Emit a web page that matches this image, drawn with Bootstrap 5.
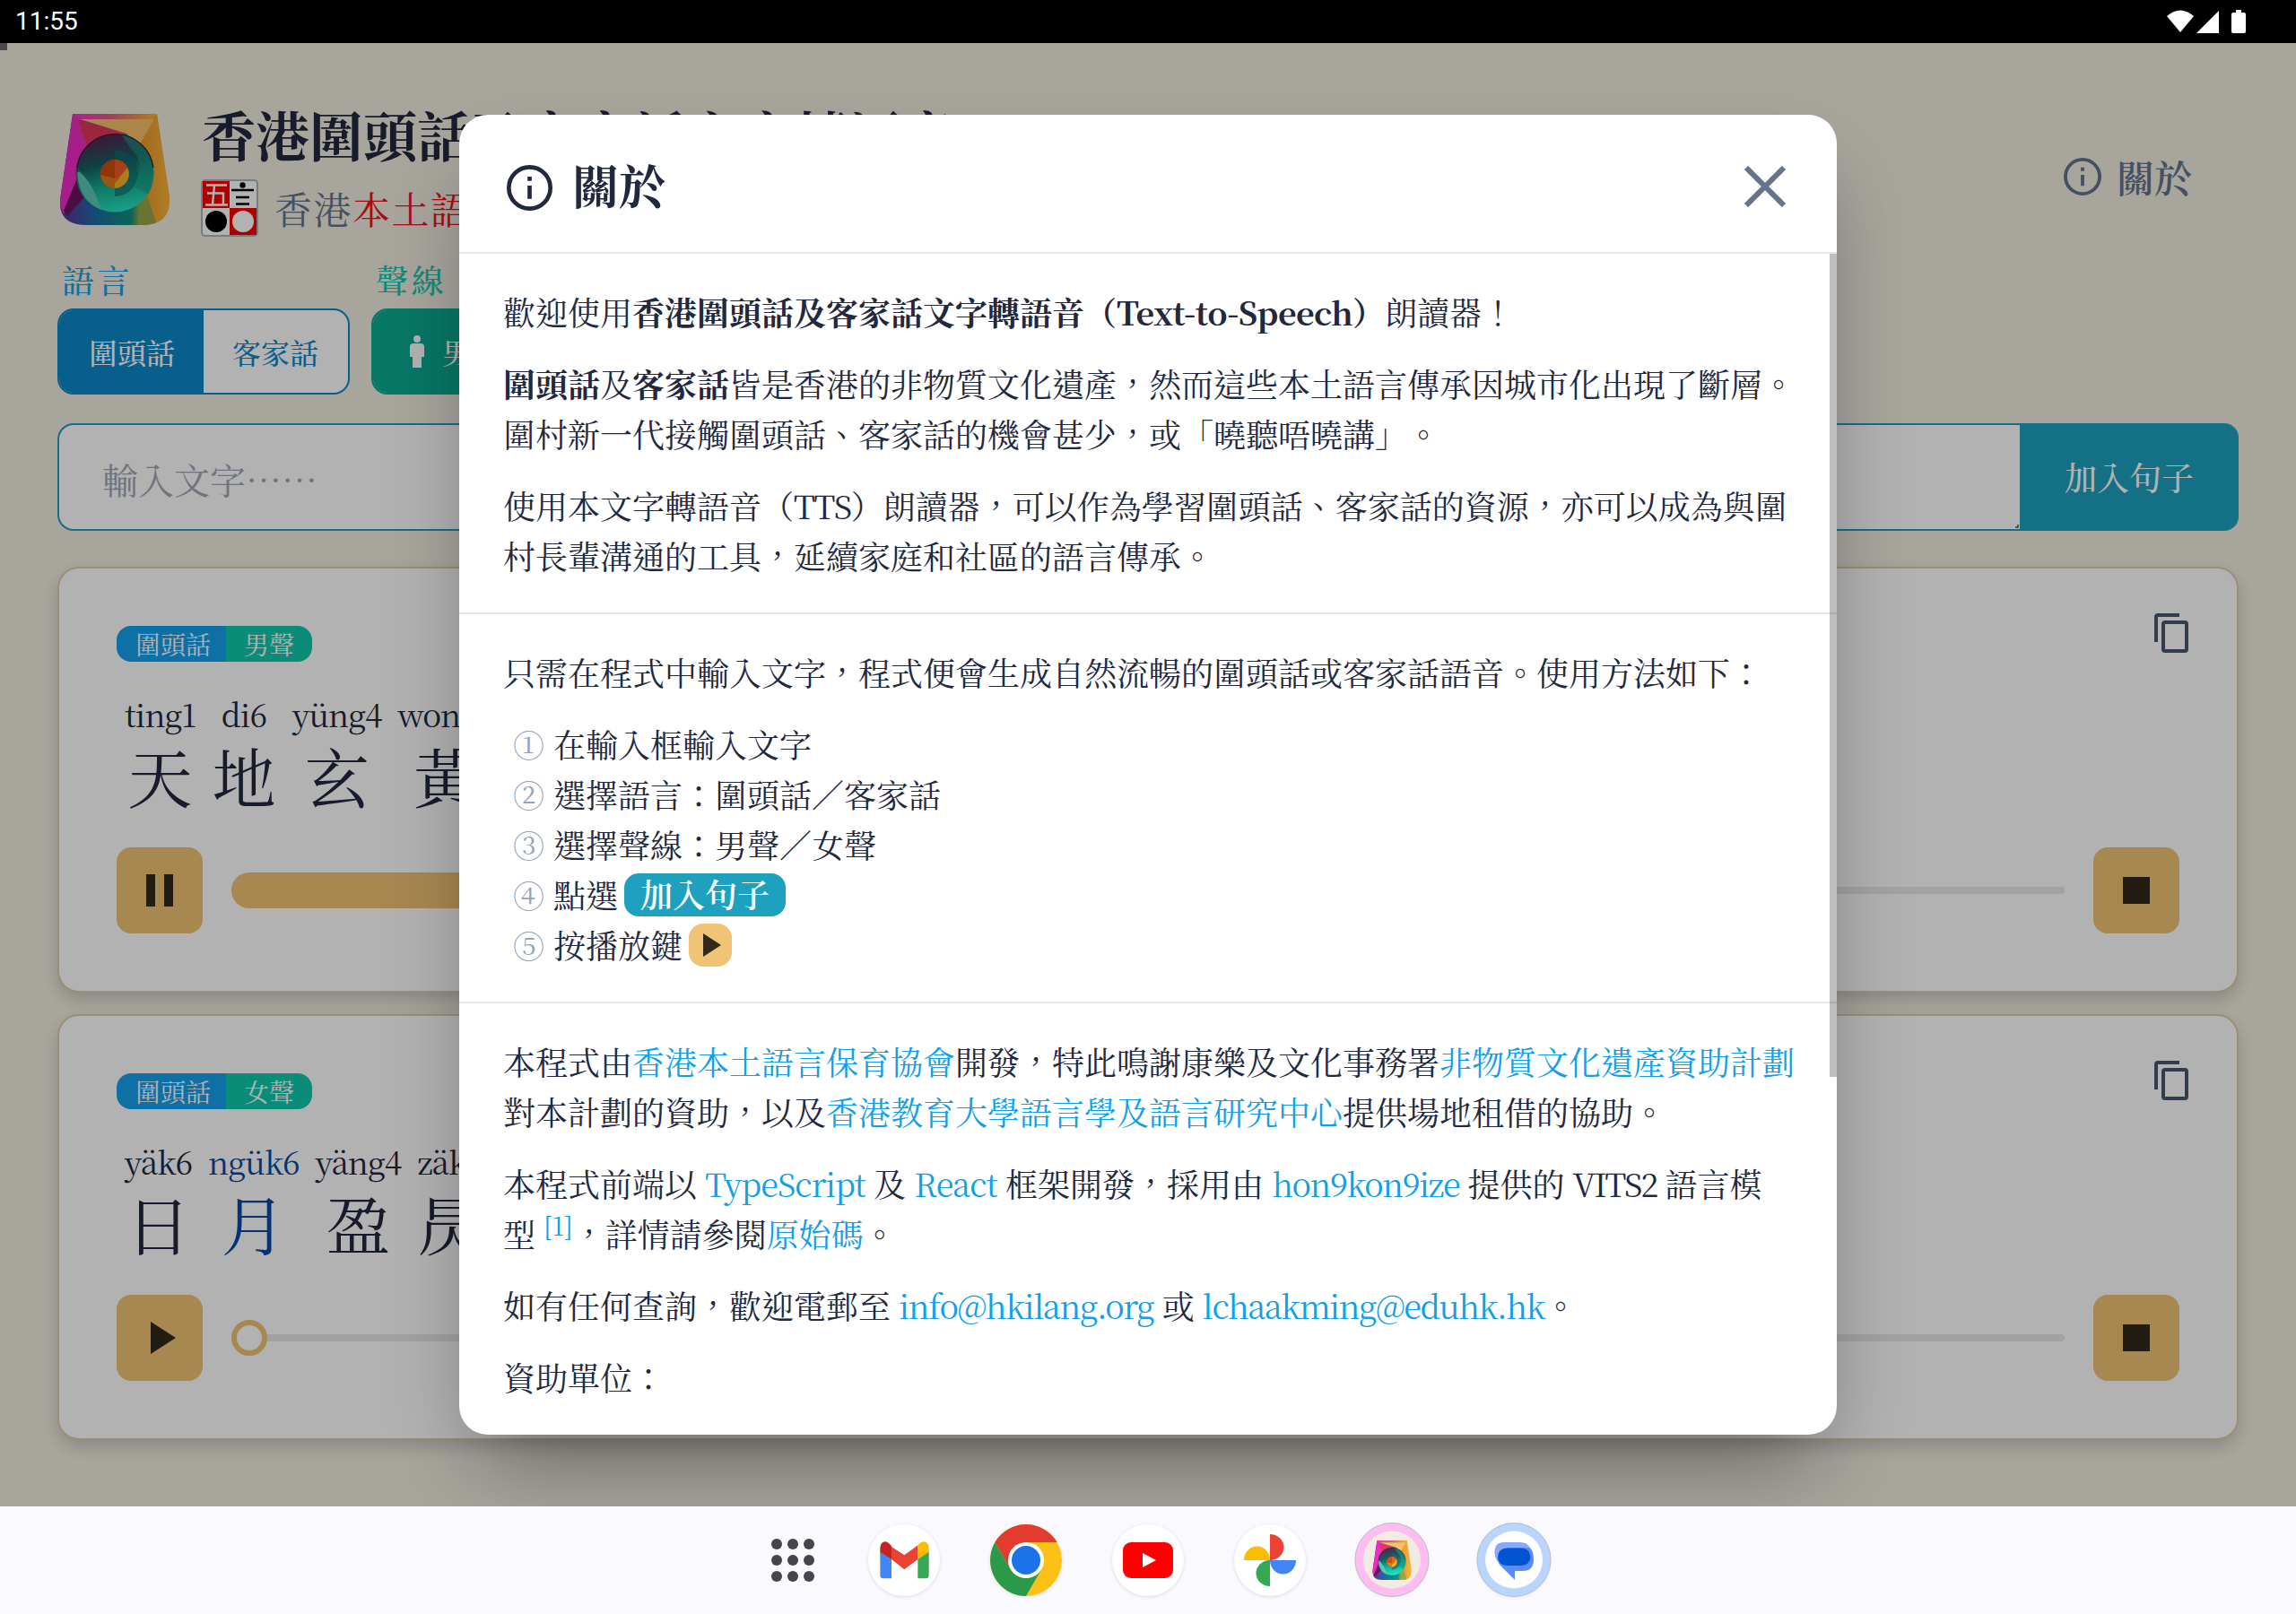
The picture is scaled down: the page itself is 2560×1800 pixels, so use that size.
<!DOCTYPE html>
<html lang="zh-Hant-HK">
<head>
<meta charset="utf-8">
<title>香港圍頭話及客家話文字轉語音</title>
<link href="https://cdn.jsdelivr.net/npm/bootstrap@5.3.0/dist/css/bootstrap.min.css" rel="stylesheet">
<style>
  :root { --ink:#22283d; --sky:#15a1ec; --mint:#10c9ae; --teal:#1da1bf; --gold:#f0c375; }
  body { font-family:"Noto Serif CJK TC","Noto Serif TC","Source Han Serif TC","Noto Serif","Liberation Serif","Noto Sans CJK TC",serif; color:var(--ink); width:2560px; height:1800px; overflow:hidden; background:#faf9ff; font-size:36px; line-height:56px; text-spacing-trim:space-all; font-feature-settings:"chws" 0; }
  svg { display:block; flex:none; }
  .statusbar { height:48px; padding:0 56px 0 17px; font:28px/48px Roboto,sans-serif; background:#000; color:#fff; }
  .stage { height:1632px; background:#f1ede1; }
  .nub { left:0; top:0; width:8px; height:8px; background:#6a6a6a; z-index:5; }
  .page { padding:68px 64px 0; }
  .topbar { height:148px; }
  .applogo { margin:11px 36px 0 3px; }
  .apptitle { font-size:60px; line-height:66px; font-weight:700; margin:0 0 18px; }
  .subtitle { font-size:42px; line-height:64px; letter-spacing:1.5px; color:#64748b; gap:18px; margin-left:-1px; }
  .subtitle em { font-style:normal; color:#f01020; }
  .aboutbtn { font-size:42px; line-height:60px; color:#64748b; font-weight:600; padding-right:52px; gap:17px; margin-top:14px; }
  .fields { gap:24px; margin-top:20px; }
  .fieldlabel { letter-spacing:3.6px; font-weight:500; padding-left:5px; margin-bottom:4px; }
  .seg { height:96px; font-size:32px; font-weight:500; border:2px solid; border-radius:18px; overflow:hidden; background:#fff; width:max-content; }
  .seg > div { padding:0 32px; } .seg > .on { padding:0 32px 0 33px; } .seg > div:last-child { padding-right:33px; }
  .seg-sky { border-color:#0e89c9; color:#0e89c9; } .seg-sky .on { background:#0e89c9; color:#fff; }
  .seg-mint { border-color:#0bab92; color:#0bab92; } .seg-mint .on { background:#0bab92; color:#fff; }
  .composer { height:120px; margin-top:32px; }
  .entry { border:2px solid var(--teal); border-right:0; border-radius:18px 0 0 18px; background:#fff; font-size:40px; color:#a0a6b4; padding:4px 0 0 48px; }
  .addbtn { width:244px; background:var(--teal); color:#fff; border-radius:0 16px 16px 0; font-weight:500; }
  .clips { gap:24px; margin-top:40px; }
  .clip { height:475px; border:2px solid #dcccab; border-radius:24px; background:#fff; padding:64px 64px 0; box-shadow:0 8px 20px -2px rgba(0,0,0,.2); }
  .tags { height:40px; font-size:28px; line-height:40px; color:#fff; border-radius:16px; overflow:hidden; width:max-content; }
  .tags span:first-child { background:var(--sky); padding:0 17px 0 21px; } .tags span:last-child { background:var(--mint); padding:0 20px; }
  .copyicon { top:50px; right:54px; }
  .syls { height:207px; padding:32px 0 0 9px; gap:18px; }
  .syls > div { min-width:72px; text-align:center; }
  .syls small { display:block; font-size:35px; line-height:52px; letter-spacing:-1px; } .syls b { display:block; font-weight:400; font-size:72px; line-height:80px; margin-top:2px; }
  .sq { width:96px; height:96px; border-radius:16px; background:var(--gold); color:#33291a; }
  .track { height:8px; border-radius:4px; background:#e8e8e8; margin:0 32px; }
  .fillbar { left:0; top:-16px; height:40px; border-radius:20px; background:var(--gold); }
  .knob { left:0; top:-16px; width:40px; height:40px; border-radius:50%; border:6px solid var(--gold); background:#fff; }
  .shade { inset:0; background:rgba(0,0,0,.3); padding-top:80px; z-index:10; }
  .dialogbox { width:1536px; height:1472px; background:#fff; border-radius:32px; overflow:hidden; box-shadow:0 50px 100px -24px rgba(0,0,0,.4); }
  .dlghead { height:155px; border-bottom:2px solid #e5e7eb; padding:6px 48px 0; }
  .dlghead h2 { font-size:52px; line-height:72px; font-weight:700; margin:-3px 0 0; }
  .sect { padding:37px 48px 35px 49px; }
  .sect + .sect { border-top:2px solid #e5e7eb; }
  .sect p { margin:0 0 24px; white-space:nowrap; } .sect p:last-child { margin:0; }
  .sect a { color:#139fe8; text-decoration:none; }
  .sect sup { font-size:28px; line-height:0; top:-.46em; }
  .t06 { letter-spacing:-.6px; } .t10 { letter-spacing:-1px; } .t13 { letter-spacing:-1.3px; } .t15 { letter-spacing:-1.5px; } .t22 { letter-spacing:-2.2px; }
  .steps { list-style:none; margin:0; padding:0 0 0 11px; }
  .steps li { height:56px; } .steps li > i { font-style:normal; font-size:35px; color:#94a3b8; width:45px; }
  .chip { height:48px; line-height:46px; border-radius:16px; background:var(--teal); color:#fff; padding:0 18px; font-weight:600; margin-left:7px; }
  .chipplay { width:48px; height:48px; border-radius:16px; background:var(--gold); margin-left:7px; }
  .thumb { right:0; top:155px; width:8px; height:918px; background:rgba(0,0,0,.25); }
  .dock { height:120px; }
  .dockrow { padding-left:860px; }
  .dockapps { gap:56px; margin-left:60px; }
  .disc { width:80px; height:80px; border-radius:50%; background:#fff; box-shadow:0 1px 4px rgba(0,0,0,.12); }
</style>
<script src="https://cdn.jsdelivr.net/npm/bootstrap@5.3.0/dist/js/bootstrap.bundle.min.js"></script>
</head>
<body>
<svg width="0" height="0" class="position-absolute">
  <defs>
    <linearGradient id="lgTop" x1="0" x2="1"><stop offset="0" stop-color="#ff2fd0"/><stop offset=".45" stop-color="#e0607c"/><stop offset="1" stop-color="#ffb52e"/></linearGradient>
    <linearGradient id="lgRight" x1="0" x2="1"><stop offset="0" stop-color="#e8962c"/><stop offset="1" stop-color="#fbb437"/></linearGradient>
    <linearGradient id="lgBase" x1="0" x2="1"><stop offset="0" stop-color="#6a2a90"/><stop offset=".3" stop-color="#1c6aa8"/><stop offset=".65" stop-color="#139080"/><stop offset=".72" stop-color="#8aa64a"/><stop offset="1" stop-color="#f4a93a"/></linearGradient>
    <linearGradient id="lgDisc" x1=".3" y1="0" x2=".5" y2="1"><stop offset="0" stop-color="#5e1c50"/><stop offset=".38" stop-color="#175c62"/><stop offset=".65" stop-color="#14a890"/><stop offset="1" stop-color="#26e6c0"/></linearGradient>
    <clipPath id="lgClip"><path d="M14 0H108L122 92Q124 124 92 124H30Q-2 124 0 96Z"/></clipPath>
    <symbol id="logo" viewBox="0 0 122 124">
      <g clip-path="url(#lgClip)">
        <rect width="122" height="124" fill="url(#lgBase)"/>
        <path d="M14 0H108L104 6H20Z" fill="url(#lgTop)"/>
        <path d="M14 0L24 6 30 40 16 80 4 112-2 96Z" fill="#ee2bc4"/>
        <path d="M14 0L40 28 30 45Z" fill="#e23aa8"/>
        <path d="M20 6L74 22 40 30 30 36Z" fill="#e0355e"/>
        <path d="M22 6H108L92 40 74 22Z" fill="#f7c069"/>
        <path d="M108 0L122 92 122 124H108L92 76 88 36Z" fill="url(#lgRight)"/>
        <path d="M92 76L108 124H86Z" fill="#9aa548"/>
        <path d="M19 72L4 108 8 114 28 92Z" fill="#6a1560"/>
      </g>
      <circle cx="61" cy="66" r="43.500" fill="url(#lgDisc)"/>
      <path d="M68 23A43.500 43.500 0 0 1 104.500 66 43.500 43.500 0 0 1 98 90L84 82Q96 56 80 40Z" fill="#1a9a80" opacity=".6"/>
      <path d="M61 40A26 26 0 0 1 61 92Z" fill="#0c6d6c" opacity=".65"/>
      <path d="M21 64Q36 76 46 107Q22 98 19 66Z" fill="#5cc8b6"/>
      <path d="M19 60A43 43 0 0 1 61 22.500 43 43 0 0 1 104 60" fill="none" stroke="#301828" stroke-width="1.200"/>
      <circle cx="61" cy="67" r="16" fill="#e07a1c"/>
      <path d="M45 68A16 16 0 0 1 61 51V72Z" fill="#cf4c0e"/><path d="M61 51A16 16 0 0 1 75 60L63 72H61Z" fill="#ee5a24"/><path d="M75 60A16 16 0 0 1 61 83V78Z" fill="#f5b429"/>
    </symbol>
    <symbol id="info" viewBox="0 0 24 24"><circle cx="12" cy="12" r="10.900" fill="none" stroke="currentColor" stroke-width="2.200"/><path d="M10.900 6.100h2.200v2.300h-2.200zM10.900 10.800h2.200v7h-2.200z" fill="currentColor"/></symbol>
    <symbol id="copy" viewBox="0 0 38 44"><path d="M28 2H4Q2 2 2 4V32M12 10H34Q36 10 36 12V40Q36 42 34 42H12Q10 42 10 40V12Q10 10 12 10Z" fill="none" stroke="currentColor" stroke-width="4"/></symbol>
  </defs>
</svg>

<div class="statusbar d-flex align-items-center justify-content-between">
  <span>11:55</span>
  <svg width="88" height="26" viewBox="0 0 88 26" fill="#fff"><path d="M0 7Q15-6 30 7L15 25Z"/><path d="M33 26L58 1V26Z"/><path d="M77 0h6v3h3q2 0 2 2v19q0 2-2 2H74q-2 0-2-2V5q0-2 2-2h3z"/></svg>
</div>

<main class="stage position-relative overflow-hidden">
  <div class="page">
    <header class="topbar d-flex justify-content-between">
      <div class="d-flex">
        <svg class="applogo" width="122" height="124"><use href="#logo"/></svg>
        <div>
          <h1 class="apptitle">香港圍頭話及客家話文字轉語音</h1>
          <div class="subtitle d-flex align-items-center">
            <svg width="64" height="64" viewBox="0 0 64 64"><rect x="1" y="1" width="62" height="62" rx="4" fill="#fff" stroke="#a9b3be" stroke-width="2"/><path d="M2 2H32V32H2zM32 32H62V62H32z" fill="#fb0000"/><circle cx="17" cy="47" r="12"/><circle cx="47" cy="47" r="12" fill="#fff"/><circle cx="46.500" cy="6.500" r="3.200"/><path d="M34 12H59M39 20H54M39 27.500H54" stroke="#000" stroke-width="2.400"/><path d="M6 6.500H29M7 15.500H25V28M15 7L13 28M5 28.500H30" fill="none" stroke="#fff" stroke-width="2.400"/></svg>
            <span>香港<em>本土語言</em>保育協會</span>
          </div>
        </div>
      </div>
      <div class="aboutbtn d-flex align-items-center align-self-center"><svg width="42" height="42"><use href="#info"/></svg><span>關於</span></div>
    </header>

    <div class="fields d-flex">
      <div>
        <div class="fieldlabel" style="color:var(--sky)">語言</div>
        <div class="seg seg-sky d-flex align-items-stretch"><div class="on d-flex align-items-center">圍頭話</div><div class="d-flex align-items-center">客家話</div></div>
      </div>
      <div>
        <div class="fieldlabel" style="color:var(--mint)">聲線</div>
        <div class="seg seg-mint d-flex align-items-stretch"><div class="on d-flex align-items-center gap-3"><svg class="ms-1" width="24" height="36" viewBox="0 0 24 36" fill="currentColor"><circle cx="12" cy="4" r="4"/><path d="M8 9h8q4 0 4 4v11h-3v12H7V24H4V13q0-4 4-4z"/></svg>男聲</div><div class="d-flex align-items-center">女聲</div></div>
      </div>
    </div>

    <div class="composer d-flex">
      <div class="entry flex-grow-1 d-flex align-items-center position-relative">輸入文字……<svg class="position-absolute bottom-0 end-0" width="6" height="6"><path d="M4 1V4H1" stroke="#555" stroke-width="1.500" fill="none"/></svg></div>
      <div class="addbtn d-flex align-items-center justify-content-center">加入句子</div>
    </div>

    <div class="clips d-flex flex-column">
      <section class="clip position-relative">
        <div class="tags d-flex"><span>圍頭話</span><span>男聲</span></div>
        <svg class="copyicon position-absolute" width="38" height="44" color="#49576e"><use href="#copy"/></svg>
        <div class="syls d-flex"><div><small>ting1</small><b>天</b></div><div><small>di6</small><b>地</b></div><div><small>yüng4</small><b>玄</b></div><div><small>wong4</small><b>黃</b></div></div>
        <div class="d-flex align-items-center">
          <div class="sq d-flex align-items-center justify-content-center"><svg width="30" height="36" fill="currentColor"><path d="M0 0h10v36H0zM20 0h10v36H20z"/></svg></div>
          <div class="track flex-grow-1 position-relative"><div class="fillbar position-absolute" style="width:34%"></div></div>
          <div class="sq d-flex align-items-center justify-content-center"><svg width="30" height="30" fill="currentColor"><path d="M0 0h30v30H0z"/></svg></div>
        </div>
      </section>
      <section class="clip position-relative">
        <div class="tags d-flex"><span>圍頭話</span><span>女聲</span></div>
        <svg class="copyicon position-absolute" width="38" height="44" color="#49576e"><use href="#copy"/></svg>
        <div class="syls d-flex"><div><small>yäk6</small><b>日</b></div><div style="color:#0748a4"><small>ngük6</small><b>月</b></div><div><small>yäng4</small><b>盈</b></div><div><small>zäk6</small><b>昃</b></div></div>
        <div class="d-flex align-items-center">
          <div class="sq d-flex align-items-center justify-content-center"><svg class="ms-2" width="28" height="36" fill="currentColor"><path d="M0 0L28 18 0 36z"/></svg></div>
          <div class="track flex-grow-1 position-relative"><div class="knob position-absolute"></div></div>
          <div class="sq d-flex align-items-center justify-content-center"><svg width="30" height="30" fill="currentColor"><path d="M0 0h30v30H0z"/></svg></div>
        </div>
      </section>
    </div>
  </div>

  <div class="nub position-absolute"></div>
  <div class="shade position-absolute d-flex justify-content-center align-items-start">
    <div class="dialogbox position-relative">
      <div class="dlghead d-flex align-items-center justify-content-between">
        <div class="d-flex align-items-center" style="gap:22px;padding-left:5px"><svg class="mt-1" width="51" height="51"><use href="#info"/></svg><h2>關於</h2></div>
        <svg width="46" height="46" viewBox="0 0 46 46" style="margin-right:9px"><path d="M2 2L44 44M44 2L2 44" stroke="#64748b" stroke-width="6"/></svg>
      </div>
      <div class="sect">
        <p>歡迎使用<strong>香港圍頭話及客家話文字轉語音（<span class="t06">Text-to-Speech</span>）</strong>朗讀器！</p>
        <p><strong>圍頭話</strong>及<strong>客家話</strong>皆是香港的非物質文化遺產，然而這些本土語言傳承因城市化出現了斷層。<br>圍村新一代接觸圍頭話、客家話的機會甚少，或「曉聽唔曉講」。</p>
        <p>使用本文字轉語音（<span class="t15">TTS</span>）朗讀器，可以作為學習圍頭話、客家話的資源，亦可以成為與圍<br>村長輩溝通的工具，延續家庭和社區的語言傳承。</p>
      </div>
      <div class="sect">
        <p>只需在程式中輸入文字，程式便會生成自然流暢的圍頭話或客家話語音。使用方法如下：</p>
        <ol class="steps">
          <li class="d-flex align-items-center"><i>①</i>在輸入框輸入文字</li>
          <li class="d-flex align-items-center"><i>②</i>選擇語言：圍頭話／客家話</li>
          <li class="d-flex align-items-center"><i>③</i>選擇聲線：男聲／女聲</li>
          <li class="d-flex align-items-center"><i>④</i>點選<span class="chip">加入句子</span></li>
          <li class="d-flex align-items-center"><i>⑤</i>按播放鍵<span class="chipplay d-flex align-items-center justify-content-center"><svg class="ms-1" width="20" height="26"><path d="M0 0L20 13 0 26z" fill="#33291a"/></svg></span></li>
        </ol>
      </div>
      <div class="sect">
        <p>本程式由<a href="#">香港本土語言保育協會</a>開發，特此鳴謝康樂及文化事務署<a href="#">非物質文化遺產資助計劃</a><br>對本計劃的資助，以及<a href="#">香港教育大學語言學及語言研究中心</a>提供場地租借的協助。</p>
        <p>本程式前端以 <a class="t10" href="#">TypeScript</a> 及 <a class="t10" href="#">React</a> 框架開發，採用由 <a class="t15" href="#">hon9kon9ize</a> 提供的 <span class="t22">VITS2</span> 語言模<br>型 <sup><a href="#">[1]</a></sup>，詳情請參閱<a href="#">原始碼</a>。</p>
        <p>如有任何查詢，歡迎電郵至 <a class="t13" href="#">info@hkilang.org</a> 或 <a class="t15" href="#">lchaakming@eduhk.hk</a>。</p>
        <p>資助單位：</p>
      </div>
      <div class="thumb position-absolute"></div>
    </div>
  </div>
</main>

<footer class="dock d-flex align-items-center">
  <div class="dockrow d-flex align-items-center">
    <svg width="48" height="48" fill="#44454f"><g id="dots"><circle cx="6" cy="6" r="6"/><circle cx="24" cy="6" r="6"/><circle cx="42" cy="6" r="6"/></g><use href="#dots" y="18"/><use href="#dots" y="36"/></svg>
    <div class="dockapps d-flex align-items-center">
      <div class="disc"><svg width="80" height="80" viewBox="0 0 240 240"><path d="M40 90L78 116V181H50Q40 181 40 171Z" fill="#4285f4"/><path d="M166 116L203 90V171Q203 181 193 181H166Z" fill="#34a853"/><path d="M78 75L121 103 166 70V117L121 151 78 117Z" fill="#ea4335"/><path d="M40 92V78Q42 58 58 58 65 58 78 72V117Z" fill="#c5221f"/><path d="M203 92V78Q201 58 185 58 178 58 166 70V117Z" fill="#fbbc04"/></svg></div>
      <div class="disc"><svg width="80" height="80" viewBox="0 0 80 80"><circle cx="40" cy="40" r="40" fill="#fbc116"/><path d="M5.400 20A40 40 0 0 1 74.600 20H40L22.700 50Z" fill="#e33b2e"/><path d="M5.400 20A40 40 0 0 0 40 80L57.300 50 40 60 22.700 50Z" fill="#2a9a4a"/><circle cx="40" cy="40" r="20" fill="#fff"/><circle cx="40" cy="40" r="16" fill="#1a73e8"/></svg></div>
      <div class="disc"><svg width="80" height="80"><rect x="12" y="20" width="56" height="40" rx="9" fill="#f00"/><path d="M34 32L49 40 34 48Z" fill="#fff"/></svg></div>
      <div class="disc"><svg width="80" height="80"><path d="M40 11A15.500 14.500 0 0 1 40 40Z" fill="#ea4335"/><path d="M40 40H69A14.500 15.500 0 0 1 40 40Z" fill="#4285f4"/><path d="M40 40V69A15.500 14.500 0 0 1 40 40Z" fill="#34a853"/><path d="M40 40H11A14.500 15.500 0 0 1 40 40Z" fill="#fbbc04"/></svg></div>
      <div class="disc"><svg width="80" height="80" overflow="visible"><circle cx="40" cy="39.500" r="41" fill="#fdbdf1" stroke="#bdbdc4"/><circle cx="40" cy="39.500" r="32" fill="#f0ece1"/><use href="#logo" x="18" y="18" width="44" height="44"/></svg></div>
      <div class="disc"><svg width="80" height="80" overflow="visible"><circle cx="40" cy="39.500" r="41" fill="#b8d5fd" stroke="#bdbdc4"/><circle cx="40" cy="39.500" r="32" fill="#fff"/><path d="M29 20H46Q59 20 59 33T46 46H28Q18.500 42 18.500 31T29 20Z" fill="#86a9ff"/><path d="M33 26H58Q62 31 62 39 62 52 50 52H41V62L25 46Q22 43 22 38Z" fill="#598bff"/><rect x="22" y="26.500" width="36.500" height="19.500" rx="9.700" fill="#0056d2"/></svg></div>
    </div>
  </div>
</footer>
</body>
</html>
